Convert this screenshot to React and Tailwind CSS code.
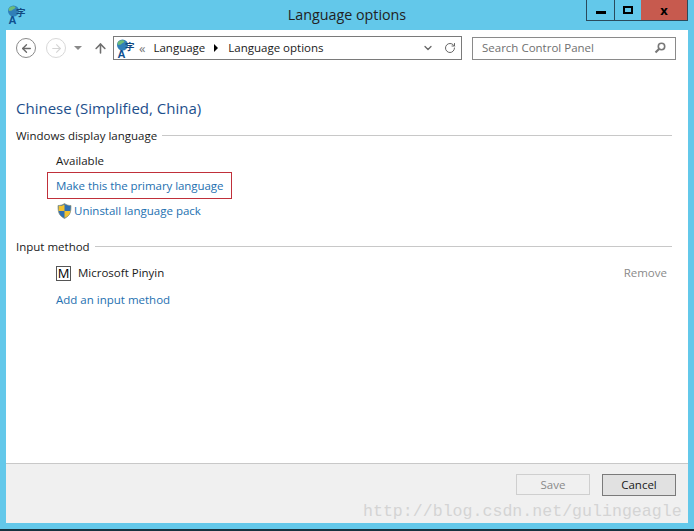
import React from 'react';
import { ArrowLeft, ArrowRight, ArrowUp, ChevronDown, RotateCw, Search } from 'lucide-react';

function LangIcon() {
  return (
    <svg width="19" height="19" viewBox="0 0 19 19" className="shrink-0 overflow-visible">
      <circle cx="6.500" cy="6" r="5.500" fill="#2f7fb8" />
      <path d="M2.500 2.500c2-1.500 5-1.500 6-.5 0 2-2 1.500-3 3-1 1-2 .5-3.500 1-.5-1.500-.5-2.500.5-3.500z" fill="#6dbb78" />
      <text x="1.500" y="18.500" fontSize="11" fontWeight="700" fill="#0f4f8f" fontFamily="'Liberation Sans', sans-serif">A</text>
      <text x="9" y="11" fontSize="9.500" fontWeight="700" fill="#12497f" fontFamily="'Noto Sans CJK SC', sans-serif">字</text>
    </svg>
  );
}

function Shield() {
  return (
    <svg width="15" height="16" viewBox="0 0 15 16" className="shrink-0">
      <path d="M7.500 .5C5.500 2 3.500 2.500 1 2.500c0 6 .5 10 6.500 13 6-3 6.500-7 6.500-13C11.500 2.500 9.500 2 7.500 .5z" fill="#2f6fb5" stroke="#8a8f75" strokeWidth=".7" />
      <path d="M7.500 1.500v6.500H1.600c.1-1.800 0-3.300 0-5 2.300 0 4.200-.4 5.900-1.500zM7.500 8h5.900c-.4 3-1.800 5.300-5.900 7z" fill="#f2c230" />
    </svg>
  );
}

function SectionHeading({ label, className }) {
  return (
    <div className={`flex items-center gap-[5px] mr-[16px] ${className}`}>
      <span className="text-[#1a1a1a]">{label}</span>
      <div className="flex-1 h-px bg-[#c8c8c8] -mt-px" />
    </div>
  );
}

export default function App() {
  return (
    <div className="relative w-[694px] h-[531px] overflow-hidden bg-[#63c8ea] flex flex-col font-['Open_Sans','Noto_Sans',sans-serif] text-[11.500px] leading-[16px]">
      {/* title bar */}
      <div className="h-[30px] shrink-0 flex items-start relative">
        <div className="ml-[7px] mt-[5px]"><LangIcon /></div>
        <div className="absolute left-0 right-0 top-[6px] text-center text-[14.300px] leading-[18px] text-[#222]">Language options</div>
        <div className="ml-auto mr-[6px] relative flex h-[21px] border border-t-0 border-[#2a4a5c]">
          <div className="w-[28px] border-r border-[#2a4a5c] flex items-center justify-center">
            <div className="w-[10px] h-[3px] bg-black mt-[4px]" />
          </div>
          <div className="w-[26px] flex items-center justify-center">
            <div className="w-[10px] h-[8px] border-2 border-black" />
          </div>
          <div className="w-[46px] bg-[#c75a4e] flex items-center justify-center text-[13px] font-bold text-black">x</div>
        </div>
      </div>

      {/* client area */}
      <div className="flex-1 mx-[6px] bg-white flex flex-col min-h-0">
        {/* toolbar */}
        <div className="h-[36px] shrink-0 flex items-center pl-[10px] pr-[12px]">
          <div className="w-[20px] h-[20px] rounded-full border border-[#8a8a8a] flex items-center justify-center">
            <ArrowLeft size={13} strokeWidth={2.500} className="text-[#6a6a6a]" />
          </div>
          <div className="w-[20px] h-[20px] ml-[10px] rounded-full border border-[#d8d8d8] flex items-center justify-center">
            <ArrowRight size={13} strokeWidth={2} className="text-[#d4d4d4]" />
          </div>
          <div className="ml-[8px] w-0 h-0 border-x-[4px] border-x-transparent border-t-[4px] border-t-[#8a8a8a]" />
          <ArrowUp size={15} strokeWidth={2.500} className="ml-[11px] text-[#6f6f6f]" />
          <div className="ml-[5px] w-[349px] h-[24px] border border-[#7a7a7a] flex items-center pl-[2px] pr-[4px]">
            <LangIcon />
            <span className="ml-[4px] text-[#777] text-[13px]">«</span>
            <span className="ml-[8px] text-[#1a1a1a]">Language</span>
            <div className="ml-[9px] w-0 h-0 border-y-[4px] border-y-transparent border-l-[4px] border-l-black" />
            <span className="ml-[10px] text-[#1a1a1a]">Language options</span>
            <ChevronDown size={12} strokeWidth={2.500} className="ml-auto text-[#666]" />
            <RotateCw size={12} strokeWidth={2} className="ml-[10px] mr-[1px] text-[#666]" />
          </div>
          <div className="ml-auto w-[204px] h-[23px] border border-[#8a8a8a] flex items-center pl-[9px] pr-[9px]">
            <span className="text-[#707070]">Search Control Panel</span>
            <svg width="12" height="12" viewBox="0 0 12 12" fill="none" stroke="#777" className="ml-auto">
              <circle cx="7.500" cy="4.500" r="3.200" strokeWidth="1.600" />
              <path d="M5 7L1.500 10.500" strokeWidth="2.200" />
            </svg>
          </div>
        </div>

        {/* content */}
        <div className="flex-1 min-h-0 pl-[10px]">
          <h1 className="mt-[32px] text-[15px] leading-[20px] text-[#1d4f8c]">Chinese (Simplified, China)</h1>
          <SectionHeading label="Windows display language" className="mt-[10px]" />
          <div className="ml-[40px] mt-[9px] text-[#1a1a1a]">Available</div>
          <div className="ml-[31px] mt-[3px] w-[185px] h-[27px] border border-[#c0303a] flex items-center pl-[8px] text-[#2470b0] whitespace-nowrap tracking-[-0.06px]">Make this the primary language</div>
          <div className="ml-[41px] mt-[4px] flex items-center gap-[2px] text-[#2470b0]">
            <Shield />
            <span>Uninstall language pack</span>
          </div>
          <SectionHeading label="Input method" className="mt-[20px]" />
          <div className="ml-[40px] mr-[21px] mt-[10px] flex items-center">
            <div className="w-[15px] h-[15px] border border-[#555] flex items-center justify-center text-[13px] leading-none text-black">M</div>
            <span className="ml-[7px] text-[#1a1a1a]">Microsoft Pinyin</span>
            <span className="ml-auto text-[#8a8a8a]">Remove</span>
          </div>
          <div className="ml-[40px] mt-[11px] text-[#2470b0]">Add an input method</div>
        </div>

        {/* footer */}
        <div className="h-[60px] shrink-0 border-t border-[#c8c8c8] bg-[#f0f0f0] flex items-start justify-end gap-[12px] pt-[10px] pr-[12px]">
          <div className="w-[74px] h-[21px] border border-[#cfcfcf] bg-[#f0f0f0] flex items-center justify-center text-[#8a8a8a]">Save</div>
          <div className="w-[74px] h-[22px] border border-[#7a7a7a] bg-[#e1e1e1] flex items-center justify-center text-[#1a1a1a]">Cancel</div>
        </div>
      </div>

      <div className="h-[6px] shrink-0" />
      <div className="h-[2px] shrink-0 bg-[#16323f]" />

      {/* watermark */}
      <div className="absolute left-[363px] top-[502px] font-['Liberation_Mono',monospace] text-[16.600px] leading-[20px] text-[#d4d4d4] whitespace-nowrap">http://blog.csdn.net/gulingeagle</div>
    </div>
  );
}
